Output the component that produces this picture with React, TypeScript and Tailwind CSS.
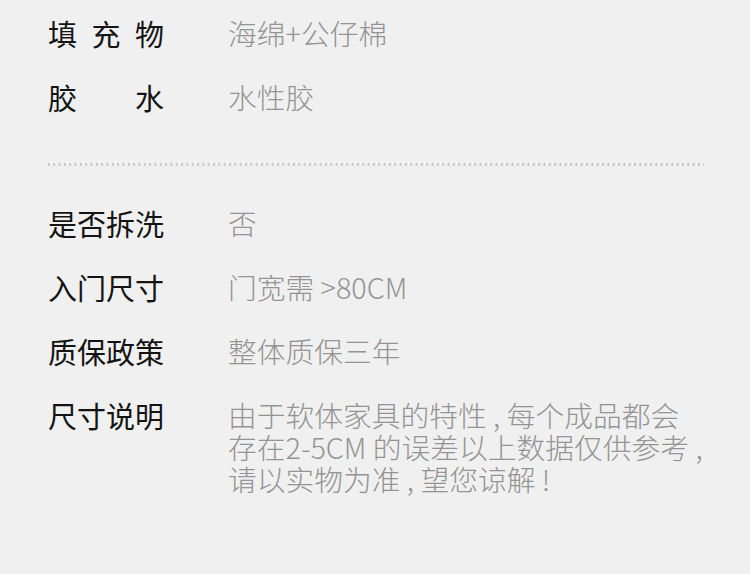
import React from "react";

const font = { fontFamily: '"Noto Sans CJK SC", "Noto Sans", sans-serif' };

function Row({ label, children, spread }: { label: string; children: React.ReactNode; spread?: boolean }) {
  return (
    <div className="flex items-start h-[64px] py-[16px] leading-[32px]">
      <div
        className={
          "w-[116px] shrink-0 text-[29px] font-normal text-[#141414] whitespace-nowrap " +
          (spread ? "flex justify-between" : "")
        }
      >
        {spread ? label.split("").map((c, i) => <span key={i}>{c}</span>) : label}
      </div>
      <div className="ml-[64px] text-[28.75px] font-light text-[#949494] whitespace-nowrap">{children}</div>
    </div>
  );
}

export default function App() {
  return (
    <div className="w-[750px] h-[574px] bg-[#f0f0f0] overflow-hidden" style={font}>
      <div className="pl-[48px] pt-[1px]">
        <Row label="填充物" spread>
          海绵+公仔棉
        </Row>
        <Row label="胶水" spread>
          水性胶
        </Row>
        <div className="mt-[34px] mb-[25px] w-[656px] h-[3px] bg-[linear-gradient(to_right,#c4c4c4_40%,transparent_40%)] bg-[length:5.33px_3px] bg-repeat-x" />
        <Row label="是否拆洗">否</Row>
        <Row label="入门尺寸">门宽需 &gt;80CM</Row>
        <Row label="质保政策">整体质保三年</Row>
        <div className="flex items-start py-[16px] leading-[32px]">
          <div className="w-[116px] shrink-0 text-[29px] font-normal text-[#141414] whitespace-nowrap">尺寸说明</div>
          <div className="ml-[64px] text-[28.75px] font-light text-[#949494] whitespace-nowrap">
            <div>由于软体家具的特性 , 每个成品都会</div>
            <div>存在2-5CM 的误差以上数据仅供参考 ,</div>
            <div>请以实物为准 , 望您谅解 !</div>
          </div>
        </div>
      </div>
    </div>
  );
}
